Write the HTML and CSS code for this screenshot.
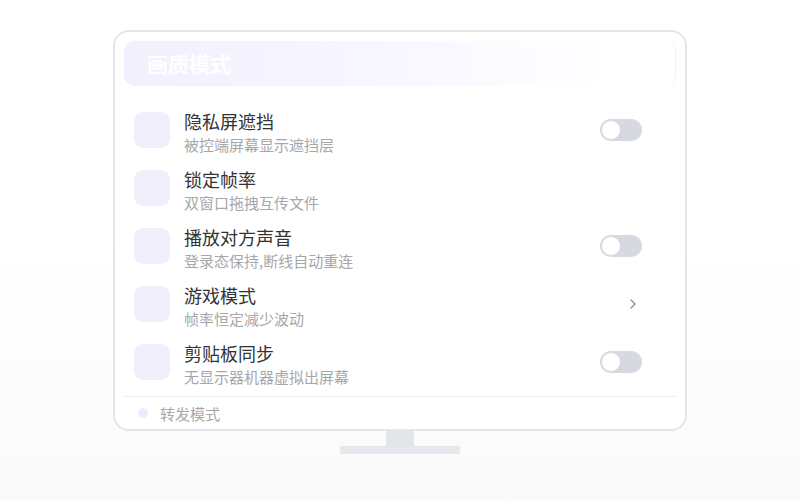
FILE: index.html
```html
<!DOCTYPE html>
<html>
<head>
	<meta charset="utf-8">
	<title>画质模式</title>
	<link rel="stylesheet" href="styles.css">
</head>
<body>
	<div class="screen">
		<div class="monitor">
			<div class="head">
				<h1 class="head-title">画质模式</h1>
				<span class="head-more">自适应</span>
			</div>
			<ul class="list">
				<li class="item">
					<span class="icon"></span>
					<div class="text">
						<p class="name">隐私屏遮挡</p>
						<p class="desc">被控端屏幕显示遮挡层</p>
					</div>
					<span class="switch"></span>
				</li>
				<li class="item">
					<span class="icon"></span>
					<div class="text">
						<p class="name">锁定帧率</p>
						<p class="desc">双窗口拖拽互传文件</p>
					</div>
				</li>
				<li class="item">
					<span class="icon"></span>
					<div class="text">
						<p class="name">播放对方声音</p>
						<p class="desc">登录态保持,断线自动重连</p>
					</div>
					<span class="switch"></span>
				</li>
				<li class="item">
					<span class="icon"></span>
					<div class="text">
						<p class="name">游戏模式</p>
						<p class="desc">帧率恒定减少波动</p>
					</div>
					<svg class="arrow" width="8" height="12" viewBox="0 0 8 12">
						<polyline points="2,2 6,6 2,10" fill="none" stroke="#8a8d93" stroke-width="1.3" stroke-linecap="round" stroke-linejoin="round"/>
					</svg>
				</li>
				<li class="item">
					<span class="icon"></span>
					<div class="text">
						<p class="name">剪贴板同步</p>
						<p class="desc">无显示器机器虚拟出屏幕</p>
					</div>
					<span class="switch"></span>
				</li>
			</ul>
			<div class="foot">
				<span class="dot"></span>
				<span class="foot-text">转发模式</span>
			</div>
		</div>
		<div class="neck"></div>
		<div class="base"></div>
	</div>
</body>
</html>
```

FILE: styles.css
```css
html{
	height: 100%;
}
body{
	margin: 0;
	height: 100%;
	background: linear-gradient(#fff 48%, #fafafb);
	font-family: "Noto Sans CJK SC", "Noto Sans", sans-serif;
}
ul, p, h1{
	margin: 0;
	padding: 0;
}
ul{
	list-style: none;
}
.screen{
	display: flex;
	flex-direction: column;
	align-items: center;
	padding-top: 30px;
}
.monitor{
	box-sizing: border-box;
	width: 574px;
	padding: 9px 9px 0;
	background-color: #fff;
	border: 2px solid #e3e6eb;
	border-radius: 16px;
}
.head{
	display: flex;
	align-items: center;
	justify-content: space-between;
	height: 45px;
	padding-left: 23px;
	background: linear-gradient(90deg, #f3f0fe 0%, #f7f5ff 40%, #fff 88%);
	border-radius: 10px;
	border-right: 1px solid #eef0f3;
}
.head-title{
	font-size: 21px;
	font-weight: bold;
	color: #fff;
	line-height: 45px;
}
.head-more{
	margin-right: 18px;
	font-size: 15px;
	color: #fff;
	opacity: 0.6;
}
.list{
	margin-top: 15px;
}
.item{
	display: flex;
	align-items: flex-start;
	height: 58px;
	padding: 0 34px 0 10px;
}
.icon{
	flex: none;
	width: 36px;
	height: 36px;
	margin-top: 11px;
	background-color: #f2effd;
	border-radius: 9px;
}
.text{
	flex: 1;
	padding: 8px 0 0 14px;
}
.name{
	font-size: 18px;
	line-height: 25px;
	color: #333336;
}
.desc{
	font-size: 15px;
	line-height: 21px;
	color: #a6a7ab;
}
.switch{
	position: relative;
	flex: none;
	align-self: center;
	width: 42px;
	height: 22px;
	background-color: #d6d9df;
	border-radius: 11px;
}
.switch::after{
	content: "";
	position: absolute;
	top: 1px;
	left: 1px;
	width: 18px;
	height: 18px;
	background-color: #fff;
	border: 1px solid #d6d9df;
	border-radius: 50%;
}
.arrow{
	align-self: center;
	margin-right: 5px;
}
.foot{
	display: flex;
	align-items: center;
	height: 32px;
	margin-top: 5px;
	padding-left: 14px;
	border-top: 1px solid #eceef2;
}
.dot{
	width: 10px;
	height: 10px;
	background-color: #efebfc;
	border-radius: 50%;
}
.foot-text{
	margin-left: 12px;
	font-size: 15px;
	color: #a6a7ab;
}
.neck{
	width: 28px;
	height: 15px;
	background-color: #e2e5ea;
}
.base{
	width: 120px;
	height: 8px;
	background-color: #e4e7eb;
}
```
